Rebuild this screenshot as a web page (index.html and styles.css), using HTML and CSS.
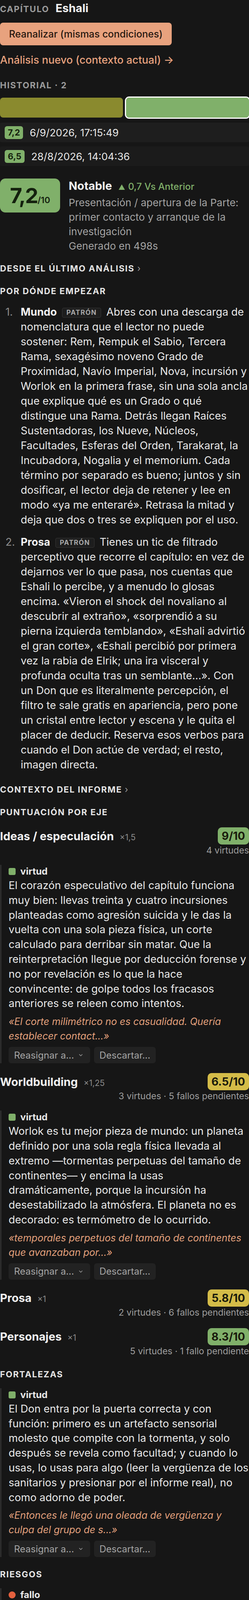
FILE: index.html
```html
<!DOCTYPE html>
<html lang="es">
<head>
    <meta charset="UTF-8">
    <meta name="viewport" content="width=device-width, initial-scale=1.0">
    <title>Análisis · Eshali</title>

    <link rel="stylesheet" href="styles.css">
</head>
<body>
    <div class="main">
        <div class="chapter">
            <span class="label">CAPÍTULO</span>
            <span class="chapter-name">Eshali</span>
        </div>

        <button class="btn-reanalyze">Reanalizar (mismas condiciones)</button>

        <a class="link-new" href="#">Análisis nuevo (contexto actual) →</a>

        <div class="label history-label">HISTORIAL · 2</div>
        <div class="history-bar">
            <span class="seg olive"></span>
            <span class="seg green current"></span>
        </div>
        <div class="history-list">
            <div class="history-row active"><span class="chip green">7,2</span>6/9/2026, 17:15:49</div>
            <div class="history-row"><span class="chip green">6,5</span>28/8/2026, 14:04:36</div>
        </div>

        <div class="summary">
            <div class="big-score"><span>7,2<small>/10</small></span></div>
            <div class="summary-text">
                <div class="verdict">Notable
                    <span class="delta"><svg width="16" height="14" viewBox="0 0 16 14"><path d="M8 0 L16 14 L0 14 Z" fill="currentColor"/></svg> 0,7 Vs Anterior</span>
                </div>
                <div class="summary-meta">Presentación / apertura de la Parte: primer contacto y arranque de la investigación<br>Generado en 498s</div>
            </div>
        </div>

        <div class="section-title first">DESDE EL ÚLTIMO ANÁLISIS <span class="chev">›</span></div>

        <div class="section-title">POR DÓNDE EMPEZAR</div>
        <ol class="start-list">
            <li>
                <span class="num">1.</span>
                <div class="item-text"><b>Mundo</b> <span class="tag">PATRÓN</span> Abres con una descarga de nomenclatura que el lector no puede sostener: Rem, Rempuk el Sabio, Tercera Rama, sexagésimo noveno Grado de Proximidad, Navío Imperial, Nova, incursión y Worlok en la primera frase, sin una sola ancla que explique qué es un Grado o qué distingue una Rama. Detrás llegan Raíces Sustentadoras, los Nueve, Núcleos, Facultades, Esferas del Orden, Tarakarat, la Incubadora, Nogalia y el memorium. Cada término por separado es bueno; juntos y sin dosificar, el lector deja de retener y lee en modo «ya me enteraré». Retrasa la mitad y deja que dos o tres se expliquen por el uso.</div>
            </li>
            <li>
                <span class="num">2.</span>
                <div class="item-text"><b>Prosa</b> <span class="tag">PATRÓN</span> Tienes un tic de filtrado perceptivo que recorre el capítulo: en vez de dejarnos ver lo que pasa, nos cuentas que Eshali lo percibe, y a menudo lo glosas encima. «Vieron el shock del novaliano al descubrir al extraño», «sorprendió a su pierna izquierda temblando», «Eshali advirtió el gran corte», «Eshali percibió por primera vez la rabia de Elrik; una ira visceral y profunda oculta tras un semblante...». Con un Don que es literalmente percepción, el filtro te sale gratis en apariencia, pero pone un cristal entre lector y escena y le quita el placer de deducir. Reserva esos verbos para cuando el Don actúe de verdad; el resto, imagen directa.</div>
            </li>
        </ol>

        <div class="section-title toggle">CONTEXTO DEL INFORME <span class="chev">›</span></div>

        <div class="section-title">PUNTUACIÓN POR EJE</div>

        <div class="axis">
            <div class="axis-head">
                <div class="axis-name">Ideas / especulación <span class="axis-weight">×1,5</span></div>
                <span class="score green">9/10</span>
            </div>
            <div class="axis-meta">4 virtudes</div>

            <div class="card">
                <div class="card-head"><span class="marker virtue"></span>virtud</div>
                <p class="card-text">El corazón especulativo del capítulo funciona muy bien: llevas treinta y cuatro incursiones planteadas como agresión suicida y le das la vuelta con una sola pieza física, un corte calculado para derribar sin matar. Que la reinterpretación llegue por deducción forense y no por revelación es lo que la hace convincente: de golpe todos los fracasos anteriores se releen como intentos.</p>
                <p class="quote">«El corte milimétrico no es casualidad. Quería establecer contact...»</p>
                <div class="actions">
                    <span class="select">Reasignar a... <svg width="10" height="6" viewBox="0 0 10 6"><path d="M1 1 L5 5 L9 1" fill="none" stroke="currentColor" stroke-width="1.4"/></svg></span>
                    <span class="btn-ghost">Descartar...</span>
                </div>
            </div>
        </div>

        <div class="axis">
            <div class="axis-head">
                <div class="axis-name">Worldbuilding <span class="axis-weight">×1,25</span></div>
                <span class="score yellow">6.5/10</span>
            </div>
            <div class="axis-meta">3 virtudes · 5 fallos pendientes</div>

            <div class="card">
                <div class="card-head"><span class="marker virtue"></span>virtud</div>
                <p class="card-text">Worlok es tu mejor pieza de mundo: un planeta definido por una sola regla física llevada al extremo —tormentas perpetuas del tamaño de continentes— y encima la usas dramáticamente, porque la incursión ha desestabilizado la atmósfera. El planeta no es decorado: es termómetro de lo ocurrido.</p>
                <p class="quote">«temporales perpetuos del tamaño de continentes que avanzaban por...»</p>
                <div class="actions">
                    <span class="select">Reasignar a... <svg width="10" height="6" viewBox="0 0 10 6"><path d="M1 1 L5 5 L9 1" fill="none" stroke="currentColor" stroke-width="1.4"/></svg></span>
                    <span class="btn-ghost">Descartar...</span>
                </div>
            </div>
        </div>

        <div class="axis">
            <div class="axis-head">
                <div class="axis-name">Prosa <span class="axis-weight">×1</span></div>
                <span class="score yellow">5.8/10</span>
            </div>
            <div class="axis-meta">2 virtudes · 6 fallos pendientes</div>
        </div>

        <div class="axis">
            <div class="axis-head">
                <div class="axis-name">Personajes <span class="axis-weight">×1</span></div>
                <span class="score green">8.3/10</span>
            </div>
            <div class="axis-meta">5 virtudes · 1 fallo pendiente</div>
        </div>

        <div class="section-title">FORTALEZAS</div>
        <div class="card">
            <div class="card-head"><span class="marker virtue"></span>virtud</div>
            <p class="card-text">El Don entra por la puerta correcta y con función: primero es un artefacto sensorial molesto que compite con la tormenta, y solo después se revela como facultad; y cuando lo usas, lo usas para algo (leer la vergüenza de los sanitarios y presionar por el informe real), no como adorno de poder.</p>
            <p class="quote">«Entonces le llegó una oleada de vergüenza y culpa del grupo de s...»</p>
            <div class="actions">
                <span class="select">Reasignar a... <svg width="10" height="6" viewBox="0 0 10 6"><path d="M1 1 L5 5 L9 1" fill="none" stroke="currentColor" stroke-width="1.4"/></svg></span>
                <span class="btn-ghost">Descartar...</span>
            </div>
        </div>

        <div class="section-title">RIESGOS</div>
        <div class="card">
            <div class="card-head"><span class="marker fault"></span>fallo</div>
            <p class="card-text">Aquí te chocan el atrezo y la escena. Has establecido que todos llevan el equipo completo puesto y que hablan por intercomunicador porque la tormenta lo tapa todo; pero después la escena funciona a base de caras: la de Cir'ik como epítome de la incomodidad, el rostro atónito de Elrik, Zair'oik incapaz de mirarla a los ojos. O declaras una vez que la membrana deja ver el rostro, o trasladas esas lecturas al Don, a la voz o al cuerpo.</p>
            <p class="quote">«¡Tu cara era el epítome de la incomodidad!»</p>
            <div class="actions">
                <span class="select">Reasignar a... <svg width="10" height="6" viewBox="0 0 10 6"><path d="M1 1 L5 5 L9 1" fill="none" stroke="currentColor" stroke-width="1.4"/></svg></span>
                <span class="btn-ghost">Descartar...</span>
            </div>
        </div>

        <div class="section-title">SEMILLAS</div>
        <div class="seed">El pitido como forma sensorial del Don: un 'ruido' que sube y baja con la intensidad emocional del entorno, reutilizable como marcador de tensión sin explicarlo. <i>«Un lejano zumbido, como un pitido agudo»</i></div>
        <div class="seed">El localizador como arma de Chéjov emocional: el momento en que Ak'iro lo active —o se niegue a activarlo— define la relación entre ambos. <i>«bastará con que lo actives para recibir ayuda de inmediato»</i></div>
    </div>
</body>
</html>
```

FILE: styles.css
```css
*{
    box-sizing: border-box;
}
body{
    margin: 0;
    background-color: #161616;
    color: #e8e8e8;
    font-family: Inter, "Noto Sans", sans-serif;
    overflow-x: hidden;
}
.main{
    width: 638px;
    padding-top: 3px;
    padding-bottom: 40px;
}

/* header */
.chapter{
    display: flex;
    align-items: baseline;
    line-height: 36px;
}
.label{
    font-size: 22px;
    font-weight: 700;
    letter-spacing: 0.08em;
    color: #9b9b9b;
}
.chapter-name{
    font-size: 29px;
    font-weight: 700;
    color: #f0f0f0;
    margin-left: 16px;
}
.btn-reanalyze{
    display: block;
    width: fit-content;
    height: 58px;
    margin-top: 17px;
    padding: 0 23px;
    border: none;
    border-radius: 8px;
    background-color: #e8a27e;
    color: #26170f;
    font-family: inherit;
    font-size: 25px;
    font-weight: 500;
}
.link-new{
    display: block;
    margin-top: 20px;
    line-height: 36px;
    font-size: 27px;
    font-weight: 500;
    color: #e8a27e;
    text-decoration: none;
}

/* history */
.history-label{
    display: block;
    margin-top: 32px;
    line-height: 28px;
}
.history-bar{
    display: flex;
    gap: 8px;
    height: 51px;
    margin-top: 18px;
}
.seg{
    flex: 1;
    border-radius: 8px;
}
.seg.olive{
    background-color: #8a8a2e;
}
.seg.green{
    background-color: #80b06a;
}
.seg.current{
    outline: 3px solid #ffffff;
}
.history-list{
    margin-top: 13px;
}
.history-row{
    display: flex;
    align-items: center;
    gap: 17px;
    height: 50px;
    padding-left: 12px;
    border-radius: 4px;
    background-color: #1b1b1b;
    font-size: 26px;
    color: #e6e6e6;
}
.history-row + .history-row{
    margin-top: 11px;
}
.history-row.active{
    background-color: #1e1e1e;
}
.chip{
    height: 33px;
    padding: 0 8px;
    border-radius: 6px;
    font-size: 22px;
    font-weight: 700;
    line-height: 33px;
    color: #15220e;
}
.green{
    background-color: #80b06a;
}
.yellow{
    background-color: #d4bc48;
}

/* summary */
.summary{
    display: flex;
    gap: 22px;
    margin-top: 32px;
}
.big-score{
    flex: none;
    display: flex;
    align-items: center;
    justify-content: center;
    width: 154px;
    height: 87px;
    border-radius: 14px;
    background-color: #80b06a;
    color: #14210e;
    font-size: 54px;
    font-weight: 700;
    letter-spacing: -2px;
    line-height: 1;
}
.big-score small{
    font-size: 22px;
    font-weight: 600;
    letter-spacing: 0;
}
.verdict{
    font-size: 29px;
    font-weight: 700;
    line-height: 38px;
    color: #f0f0f0;
}
.delta{
    margin-left: 10px;
    font-size: 24px;
    font-weight: 500;
    color: #80b06a;
}
.delta svg{
    margin-right: 2px;
}
.summary-meta{
    margin-top: 3px;
    font-size: 26px;
    line-height: 37px;
    color: #a3a3a3;
}

/* sections */
.section-title{
    margin-top: 30px;
    font-size: 22px;
    font-weight: 700;
    letter-spacing: 0.08em;
    line-height: 28px;
    color: #e4e4e4;
}
.section-title.first{
    margin-top: 25px;
}
.chev{
    color: #9b9b9b;
    font-weight: 400;
}

.start-list{
    margin: 21px 0 0;
    padding: 0;
    list-style: none;
}
.start-list li{
    display: flex;
    font-size: 27.12px;
    line-height: 38px;
}
.start-list li + li{
    margin-top: 19px;
}
.num{
    flex: none;
    width: 53px;
    padding-left: 14px;
    color: #8c8c8c;
}
.item-text b{
    color: #f2f2f2;
}
.tag{
    display: inline-block;
    margin: 0 6px;
    padding: 1px 10px;
    border: 1px solid #383838;
    border-radius: 4px;
    background-color: #1d1d1d;
    font-size: 17px;
    font-weight: 700;
    letter-spacing: 0.08em;
    line-height: 21px;
    color: #a9a9a9;
    vertical-align: middle;
}

/* axes */
.axis{
    margin-top: 25px;
}
.axis-head{
    display: flex;
    justify-content: space-between;
    align-items: center;
}
.axis-name{
    font-size: 29px;
    font-weight: 700;
    color: #f0f0f0;
}
.axis-weight{
    margin-left: 8px;
    font-size: 21px;
    font-weight: 400;
    color: #8a8a8a;
}
.score{
    height: 44px;
    padding: 0 10px;
    border-radius: 10px;
    font-size: 28px;
    font-weight: 700;
    line-height: 44px;
    color: #191a0c;
}
.axis-meta{
    text-align: right;
    font-size: 23px;
    line-height: 30px;
    color: #9d9d9d;
}

/* cards */
.card, .seed{
    margin-top: 22px;
    padding-left: 18px;
    border-left: 4px solid #2b2b2b;
}
.card-head{
    display: flex;
    align-items: center;
    gap: 12px;
    font-size: 24px;
    font-weight: 700;
    line-height: 34px;
    color: #e8e8e8;
}
.marker{
    width: 18px;
    height: 18px;
    border-radius: 4px;
}
.marker.virtue{
    background-color: #80b06a;
}
.marker.fault{
    border-radius: 50%;
    background-color: #e4603e;
}
.card-text, .seed{
    margin: 0;
    font-size: 27.07px;
    line-height: 37.8px;
    color: #e8e8e8;
}
.quote{
    margin: 9px 0 0;
    font-size: 25px;
    font-style: italic;
    line-height: 37px;
    color: #e2a07c;
}
.seed i{
    margin-left: 4px;
    color: #e2a07c;
}
.seed + .seed{
    margin-top: 20px;
}
.actions{
    display: flex;
    gap: 10px;
    margin-top: 9px;
}
.select, .btn-ghost{
    display: flex;
    align-items: center;
    height: 42px;
    padding: 0 14px;
    border-radius: 7px;
    background-color: #222222;
    font-size: 24px;
    color: #a5a5a5;
}
.select{
    gap: 12px;
    padding-right: 19px;
}
```
